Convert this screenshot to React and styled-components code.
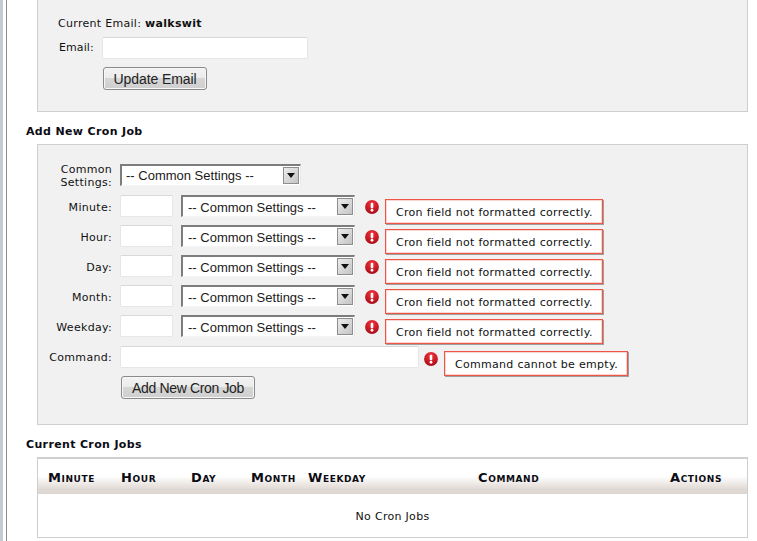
import React from "react";
import styled, { createGlobalStyle } from "styled-components";

const Global = createGlobalStyle`
  html, body { margin: 0; padding: 0; background: #fff; overflow: hidden; }
  body { font-family: "DejaVu Sans", Verdana, sans-serif; font-size: 11px; letter-spacing: 0.3px; color: #111; }
`;

const Page = styled.div`
  width: 757px; height: 541px; overflow: hidden; box-sizing: border-box;
  display: flex; background: #fff;
`;
const Rail = styled.div`
  width: 7px; flex: none; box-sizing: border-box;
  background: linear-gradient(90deg, #c3ccd4 0, #c3ccd4 3px, #fff 3px, #fff 6px);
  border-right: 1px solid #8b8b8b;
`;
const Main = styled.main`
  width: 722px; margin-left: 19px; flex: none;
`;
const Panel = styled.section`
  margin-left: 11px; width: 711px; box-sizing: border-box;
  background: #f1f1f1; border: 1px solid #cfcfcf;
`;
const EmailPanel = styled(Panel)`
  border-top: 0; height: 112px; padding: 17px 0 0 20px;
`;
const CronPanel = styled(Panel)`
  height: 281px; padding: 19px 0 0 0;
`;
const Current = styled.div`
  height: 14px; line-height: 13px; margin-bottom: 6px;
`;
const EmailRow = styled.div`
  display: flex; align-items: center; height: 21px;
`;
const EmailLabel = styled.label`
  width: 44px; flex: none; padding-left: 1px; box-sizing: border-box; letter-spacing: 0.1px;
`;
const TextField = styled.input`
  display: block; box-sizing: border-box; flex: none; margin: 0; padding: 0 3px;
  width: ${(p) => p.$w}px; height: ${(p) => p.$h || 22}px;
  background: #fff; border: 1px solid #e6e6e6; border-top-color: #d8d8d8; border-radius: 2px; outline: 0;
`;
const Button = styled.button`
  display: block; box-sizing: border-box; padding: 0; margin: 0;
  width: ${(p) => p.$w}px; height: 23px;
  font: 14px "Liberation Sans", Arial, sans-serif; color: #222; letter-spacing: ${(p) => p.$ls}px;
  background: linear-gradient(#f2f2f2 0, #ececec 45%, #d6d6d6 50%, #cfcfcf 100%);
  border: 1px solid #8a8a8a; border-radius: 3px; box-shadow: inset 0 0 0 1px #f7f7f7;
`;
const UpdateButton = styled(Button)`
  margin: 9px 0 0 45px;
`;
const Heading = styled.h3`
  margin: 0; font-size: 11px; line-height: 13px; font-weight: bold; color: #0c0c14;
  height: 13px; letter-spacing: 0.35px; padding: 13px 0 ${(p) => p.$after}px;
`;
const Form = styled.div`
  display: grid; grid-template-columns: 74px 1fr; column-gap: 8px;
`;
const Label = styled.label`
  text-align: right; line-height: 13px; align-self: start; padding-top: ${(p) => p.$top ?? 6}px;
`;
const CommonLabel = styled(Label)`
  padding-top: 0; margin-top: -1px;
`;
const Cell = styled.div`
  display: flex; align-items: flex-start; height: ${(p) => p.$h || 30}px;
`;
const Select = styled.div`
  flex: none; box-sizing: border-box; display: flex; align-items: center; justify-content: space-between;
  width: ${(p) => p.$w}px; height: 22px; margin-left: ${(p) => p.$ml || 0}px;
  background: #fff; border-top: 2px solid #7d7d7d; border-left: 2px solid #7d7d7d;
  border-right: 1px solid #e8e8e8; border-bottom: 1px solid #f4f4f4; letter-spacing: 0;
  font: 13px "Liberation Sans", Arial, sans-serif; color: #1a1a1a; padding: 0 1px 0 ${(p) => p.$pl}px;
  & > span:first-child { position: relative; top: ${(p) => p.$ty}px; }
`;
const Arrow = styled.span`
  box-sizing: border-box; width: 16px; height: 17px; display: flex; align-items: center; justify-content: center;
  background: linear-gradient(135deg, #ececec, #c4c4c4); border: 1px solid #8e8e8e;
`;
const ErrIcon = styled.svg`
  flex: none; width: 14px; height: 14px; margin: ${(p) => p.$mt}px 6px 0 ${(p) => p.$ml}px;
`;
const ErrBox = styled.div`
  flex: none; box-sizing: border-box; height: 25px; margin-top: ${(p) => p.$mt}px; padding: 0 0 0 10px;
  width: ${(p) => p.$w}px; line-height: 25px; background: #fff; color: #111;
  border: 1px solid #ee5544; box-shadow: inset 0 0 0 1px #fbd5cf, 1px 1px 0 #9f9f9f;
`;
const AddButton = styled(Button)`
  margin: 0 0 0 1px;
`;
const TableWrap = styled.div`
  margin-left: 11px; width: 711px; box-sizing: border-box; height: 81px;
  border: 1px solid #cfcfcf; border-top: 2px solid #cfcfcf;
`;
const Table = styled.table`
  width: 709px; border-collapse: collapse; table-layout: fixed;
`;
const Th = styled.th`
  height: 34px; text-align: left; vertical-align: top; padding: 11px 0 0; box-sizing: border-box;
  font-size: 13px; line-height: 15px; font-weight: bold; font-variant: small-caps; color: #0c0c14;
  letter-spacing: 0.6px;
  background: linear-gradient(#fff 0, #fff 50%, #e0d8d2 90%, #e0d8d2 100%);
  border-bottom: 1px solid #ddd5cf;
  &:first-child { padding-left: 10px; }
`;
const Td = styled.td`
  height: 44px; text-align: center; padding: 1px 0 0;
`;

const Err = ({ ml = 10, mt = 5 }) => (
  <ErrIcon $ml={ml} $mt={mt} viewBox="0 0 15 15">
    <defs>
      <radialGradient id="eg" cx="50%" cy="25%" r="75%">
        <stop offset="0" stopColor="#f4323c" />
        <stop offset="1" stopColor="#a90d18" />
      </radialGradient>
    </defs>
    <circle cx="7.5" cy="7.5" r="7.4" fill="url(#eg)" />
    <rect x="6.1" y="3" width="2.8" height="5.8" rx="1" fill="#fff" />
    <circle cx="7.5" cy="11" r="1.5" fill="#fff" />
  </ErrIcon>
);

const CommonSelect = ({ w, ml, pl = 4, ty = 0 }) => (
  <Select $w={w} $ml={ml} $pl={pl} $ty={ty}>
    <span>-- Common Settings --</span>
    <Arrow>
      <svg width="8" height="5" viewBox="0 0 8 5"><path d="M0 0h8L4 5z" fill="#111" /></svg>
    </Arrow>
  </Select>
);

const fields = ["Minute", "Hour", "Day", "Month", "Weekday"];
const cols = [
  ["Minute", 83],
  ["Hour", 70],
  ["Day", 60],
  ["Month", 57],
  ["Weekday", 170],
  ["Command", 192],
  ["Actions", 77],
];

export default function App() {
  return (
    <Page>
      <Global />
      <Rail />
      <Main>
        <EmailPanel>
          <Current>Current Email: <b>walkswit</b></Current>
          <EmailRow>
            <EmailLabel>Email:</EmailLabel>
            <TextField $w={206} $h={22} />
          </EmailRow>
          <UpdateButton $w={104} $ls={-0.1}>Update Email</UpdateButton>
        </EmailPanel>
        <Heading $after={6}>Add New Cron Job</Heading>
        <CronPanel>
          <Form>
            <CommonLabel>Common Settings:</CommonLabel>
            <Cell $h={31}><CommonSelect w={181} /></Cell>
            {fields.map((f, i) => (
              <React.Fragment key={f}>
                <Label>{f}:</Label>
                <Cell $h={i === 4 ? 31 : 30}>
                  <TextField $w={53} />
                  <CommonSelect w={174} ml={8} pl={5} ty={1} />
                  <Err />
                  <ErrBox $w={218} $mt={4}>Cron field not formatted correctly.</ErrBox>
                </Cell>
              </React.Fragment>
            ))}
            <Label $top={5}>Command:</Label>
            <Cell>
              <TextField $w={299} />
              <Err ml={5} mt={6} />
              <ErrBox $w={184} $mt={5}>Command cannot be empty.</ErrBox>
            </Cell>
            <span />
            <AddButton $w={134} $ls={-0.35}>Add New Cron Job</AddButton>
          </Form>
        </CronPanel>
        <Heading $after={6}>Current Cron Jobs</Heading>
        <TableWrap>
          <Table>
            <thead>
              <tr>
                {cols.map(([c, w]) => <Th key={c} style={{ width: w }}>{c}</Th>)}
              </tr>
            </thead>
            <tbody>
              <tr><Td colSpan={7}>No Cron Jobs</Td></tr>
            </tbody>
          </Table>
        </TableWrap>
      </Main>
    </Page>
  );
}
